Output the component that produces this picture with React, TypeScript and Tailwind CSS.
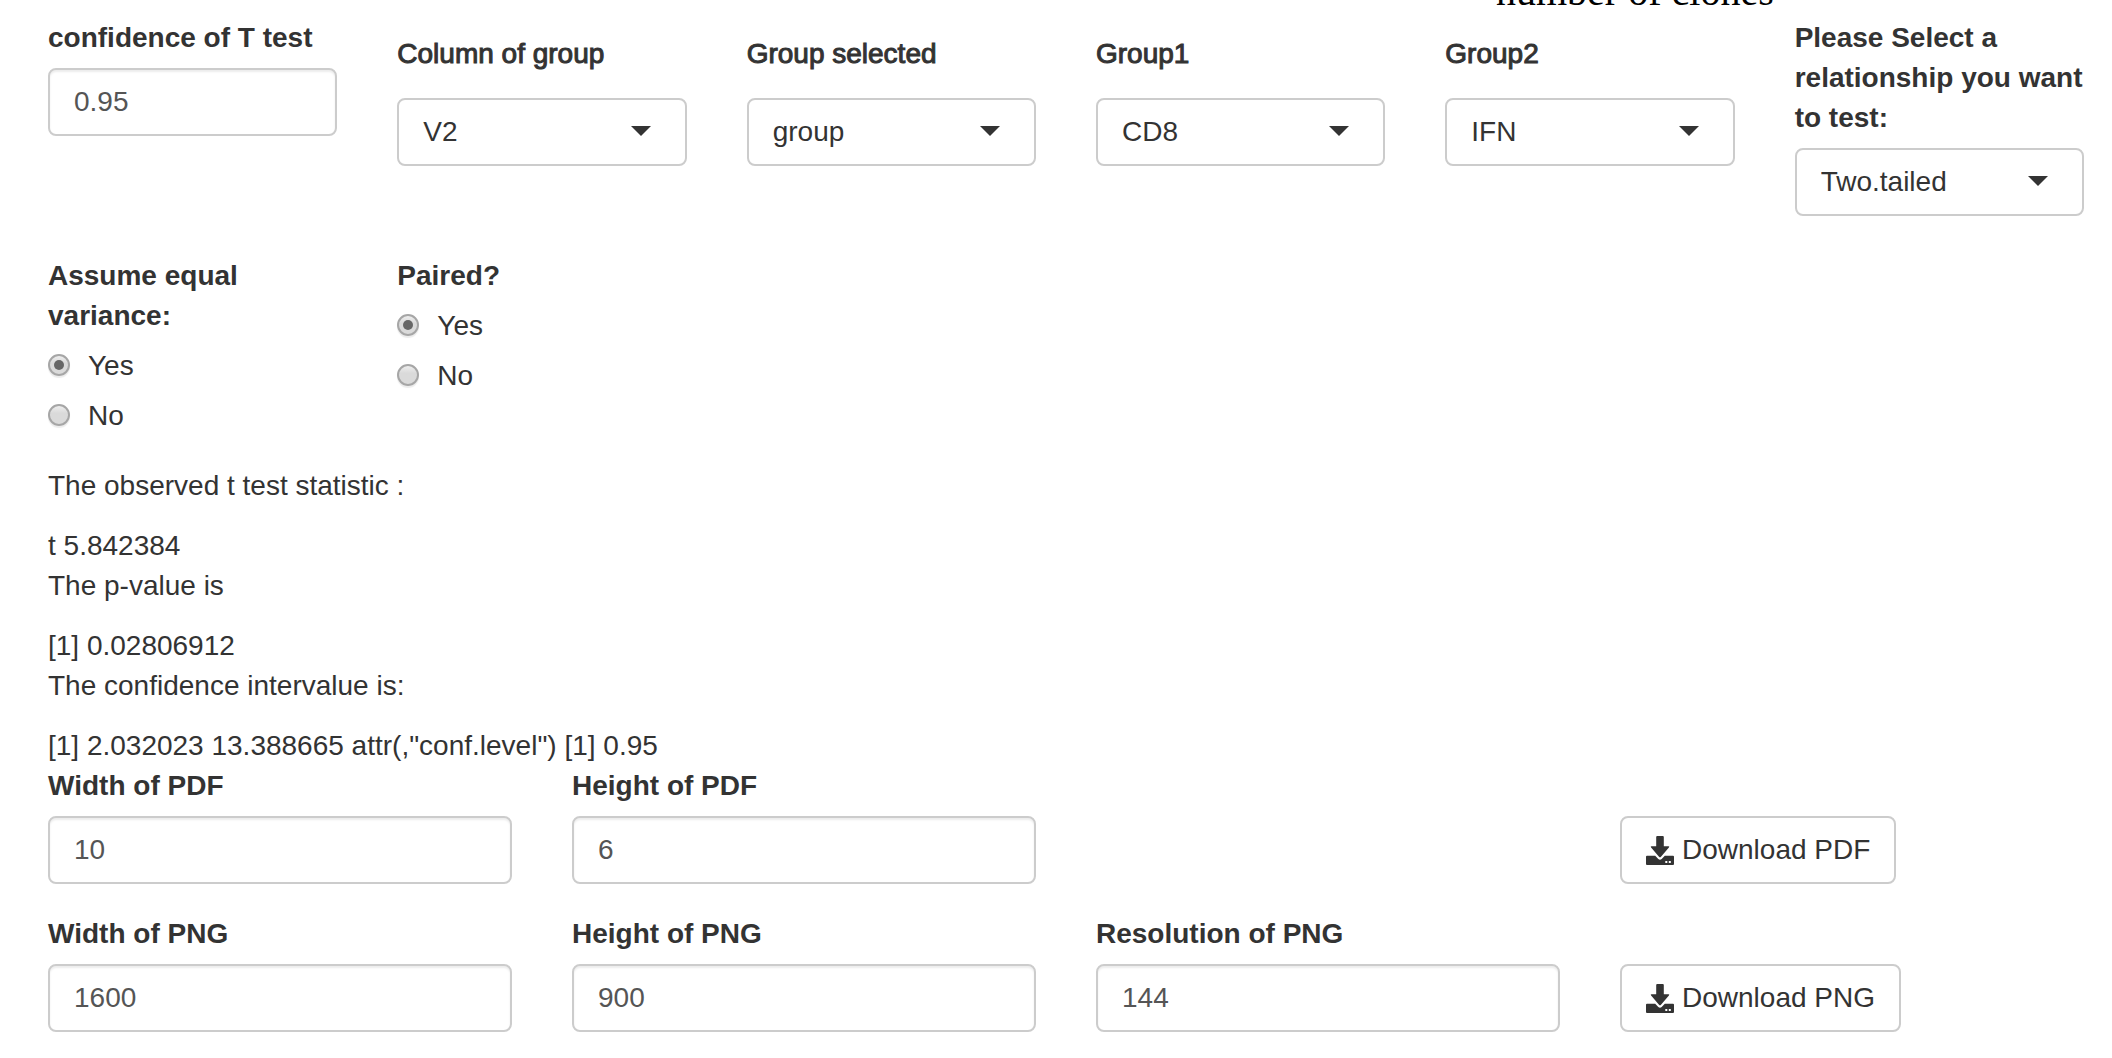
import type { ReactNode } from "react";

const fieldClass =
  "block h-[68px] w-full rounded-lg border-2 border-[#ccc] bg-white px-6 text-[28px] leading-[40px] text-[#555] shadow-[inset_0_2px_2px_rgba(0,0,0,0.075)] outline-none focus:border-[#66afe9]";

function TextField({ id, label, value }: { id: string; label: string; value: string }) {
  return (
    <div className="flex flex-col gap-[10px]">
      <label htmlFor={id} className="font-bold">
        {label}
      </label>
      <input id={id} type="text" defaultValue={value} className={fieldClass} />
    </div>
  );
}

function Select({ id, options }: { id: string; options: string[] }) {
  return (
    <div className="relative">
      <select
        id={id}
        className="block h-[68px] w-full appearance-none rounded-lg border-2 border-[#ccc] bg-white pr-16 pl-6 text-[28px] leading-[40px] text-[#333] outline-none"
      >
        {options.map((option) => (
          <option key={option}>{option}</option>
        ))}
      </select>
      <svg
        viewBox="0 0 20 10"
        className="pointer-events-none absolute top-7 right-9 h-[10px] w-5 fill-[#333]"
        aria-hidden="true"
      >
        <path d="M0 0h20L10 10z" />
      </svg>
    </div>
  );
}

function GroupSelect({ id, label, options }: { id: string; label: string; options: string[] }) {
  return (
    <div className="flex flex-col gap-6 pt-4">
      <label htmlFor={id} className="font-medium [-webkit-text-stroke:1px_#333]">
        {label}
      </label>
      <Select id={id} options={options} />
    </div>
  );
}

function RadioGroup({ name, legend }: { name: string; legend: string }) {
  return (
    <fieldset>
      <legend className="font-bold">{legend}</legend>
      <div className="mt-[10px] flex flex-col gap-[10px]">
        {["Yes", "No"].map((option) => (
          <label key={option} className="flex items-start gap-[18px]">
            <input
              type="radio"
              name={name}
              value={option}
              defaultChecked={option === "Yes"}
              className="mt-2 grid size-[22px] appearance-none place-items-center rounded-full border-2 border-[#a6a6a6] bg-linear-to-b from-[#eee] to-[#dadada] to-40% shadow-[0_2px_1px_rgba(0,0,0,0.08)] before:size-[10px] before:rounded-full checked:before:bg-[#666]"
            />
            {option}
          </label>
        ))}
      </div>
    </fieldset>
  );
}

function Result({ title, children }: { title: string; children: ReactNode }) {
  return (
    <div>
      <p className="mb-5">{title}</p>
      <output className="block">{children}</output>
    </div>
  );
}

function DownloadButton({ children }: { children: ReactNode }) {
  return (
    <button
      type="button"
      className="col-start-4 flex h-[68px] items-center gap-2 justify-self-start rounded-lg border-2 border-[#ccc] bg-white px-6 whitespace-nowrap"
    >
      <svg viewBox="0 0 28 29" className="h-[29px] w-7 fill-[#333]" aria-hidden="true">
        <path d="M11.200 0h5.600q1 0 1 1V10.300h4.600q1.500 0 .500 1.200L15 20.800q-1 1-2 0L5.100 11.500q-1-1.200.500-1.200h4.600V1q0-1 1-1z" />
        <path
          fillRule="evenodd"
          d="M1 19.800h8.200l3.100 3.200q1.700 1.400 3.400 0l3.100-3.200H27q1 0 1 1V28q0 1-1 1H1q-1 0-1-1V20.800q0-1 1-1zM19.300 25v2h2v-2zM22.800 25v2h2v-2z"
        />
      </svg>
      {children}
    </button>
  );
}

export default function App() {
  return (
    <main className="min-h-screen bg-white pr-7 pb-6 pl-12 font-['Liberation_Sans',Arial,sans-serif] text-[28px] leading-[40px] text-[#333]">
      <div className="flex h-[18px] items-end overflow-hidden">
        <p className="mb-1.5 ml-[1448px] font-['Liberation_Serif',serif] text-[40px] leading-[40px] whitespace-nowrap text-black">
          number of clones
        </p>
      </div>

      <form>
        <div className="grid grid-cols-6 gap-x-[60px]">
          <TextField id="confidence" label="confidence of T test" value="0.95" />
          <GroupSelect id="group-column" label="Column of group" options={["V2", "V1"]} />
          <GroupSelect id="group-selected" label="Group selected" options={["group"]} />
          <GroupSelect id="group1" label="Group1" options={["CD8", "IFN"]} />
          <GroupSelect id="group2" label="Group2" options={["IFN", "CD8"]} />
          <div className="flex flex-col gap-[10px]">
            <label htmlFor="relationship" className="font-bold">
              Please Select a relationship you want to test:
            </label>
            <Select id="relationship" options={["Two.tailed", "less", "greater"]} />
          </div>
        </div>

        <div className="mt-10 grid grid-cols-6 gap-x-[60px]">
          <RadioGroup name="equal-variance" legend="Assume equal variance:" />
          <RadioGroup name="paired" legend="Paired?" />
        </div>

        <section className="mt-[30px]">
          <Result title="The observed t test statistic :">t 5.842384</Result>
          <Result title="The p-value is">[1] 0.02806912</Result>
          <Result title="The confidence intervalue is:">
            [1] 2.032023 13.388665 attr(,"conf.level") [1] 0.95
          </Result>
        </section>

        <div className="grid grid-cols-4 items-end gap-x-[60px] gap-y-[30px]">
          <TextField id="pdf-width" label="Width of PDF" value="10" />
          <TextField id="pdf-height" label="Height of PDF" value="6" />
          <DownloadButton>Download PDF</DownloadButton>
          <TextField id="png-width" label="Width of PNG" value="1600" />
          <TextField id="png-height" label="Height of PNG" value="900" />
          <TextField id="png-resolution" label="Resolution of PNG" value="144" />
          <DownloadButton>Download PNG</DownloadButton>
        </div>
      </form>
    </main>
  );
}
